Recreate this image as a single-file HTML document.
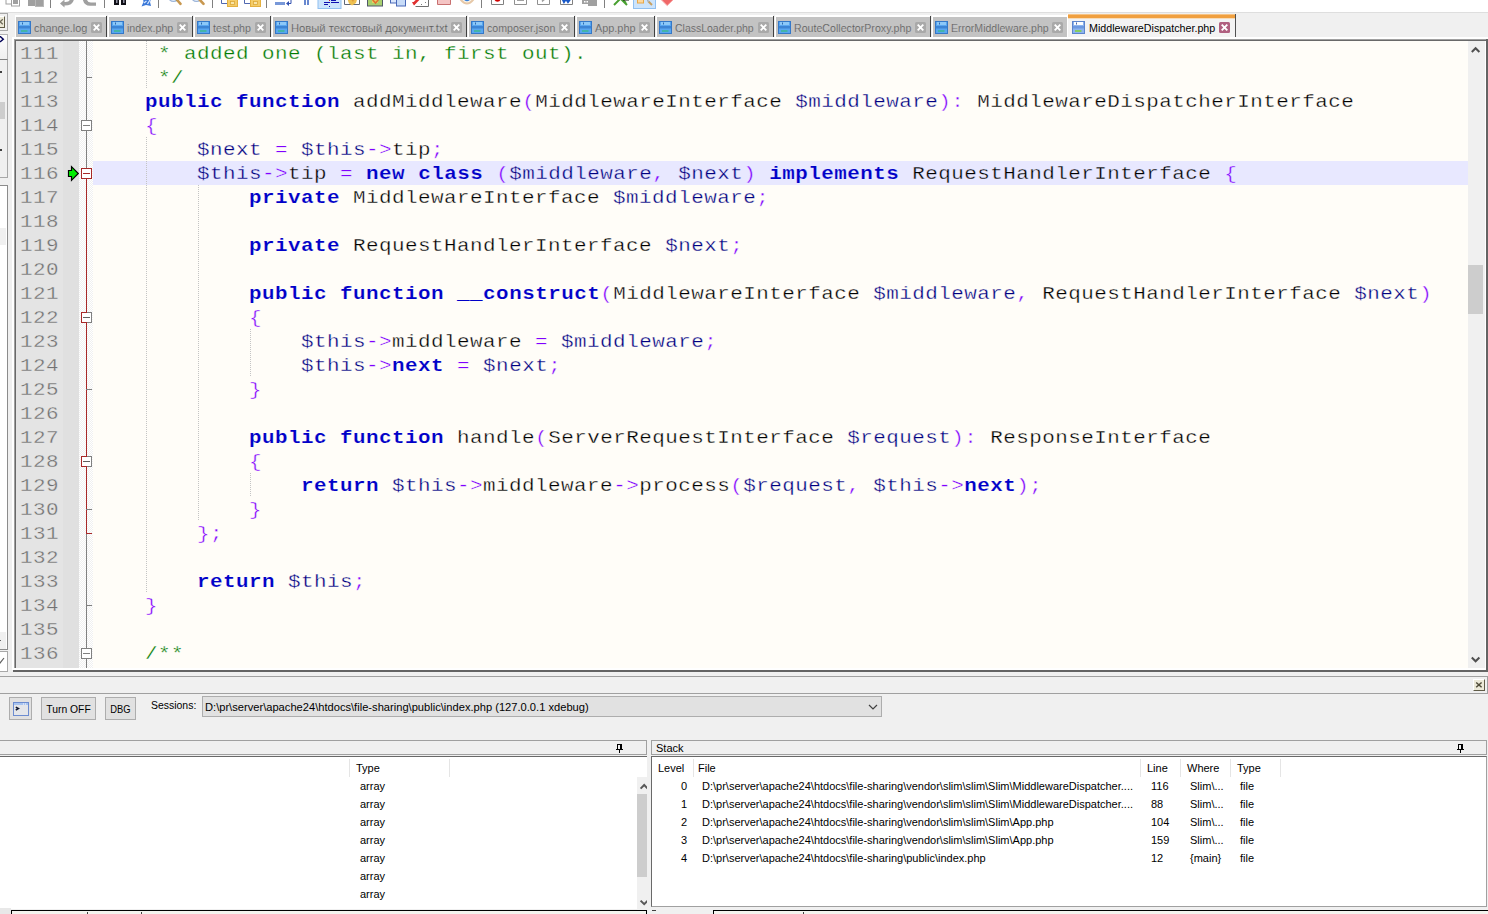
<!DOCTYPE html>
<html lang="en"><head><meta charset="utf-8"><title>Notepad++ - MiddlewareDispatcher.php</title>
<style>

*{box-sizing:border-box;margin:0;padding:0}
html,body{width:1488px;height:914px;overflow:hidden;background:#f0f0f0}
body{position:relative;font-family:"Liberation Sans","DejaVu Sans",sans-serif;font-size:11px;color:#000}
.abs,.abs *{position:absolute}
.abs{left:0;top:0;width:1488px;height:914px;overflow:hidden}
.b{display:block}
/* ---------- tabs */
.tab{top:17px;height:20px;background:#c3c3c3;color:#5e5e5e;white-space:nowrap}
.tab:before{content:"";position:absolute;left:-1px;top:-2px;width:1px;height:22px;background:#fff}
.tab:after{content:"";position:absolute;left:-1px;right:0;top:-2px;height:2px;background:#fff}
.tab .sep{right:-1px;top:-1px;width:1px;height:21px;background:#404040}
.tab .lbl{left:18px;top:5px;font-size:11px;line-height:13px;letter-spacing:0;transform-origin:0 0;-webkit-text-stroke:0.18px #c3c3c3}
.tab .ico{left:2px;top:4px;width:13px;height:13px}
.tab .cls{right:4px;top:5px;width:11px;height:11px}
.tab.act{top:14px;height:24px;background:#f3f3f3;color:#000}
.tab.act:before{height:24px;top:0}
.tab.act:after{display:none}
.tab.act .bar{left:0;right:0;top:0;height:5px;background:#f0a040;border-top:1px solid #f6c384;border-bottom:1px solid #f8dcb8}
.tab.act .sep{right:-1px;top:0;height:24px;background:#505050}
.tab.act .lbl{top:8px;left:20.5px;-webkit-text-stroke:0}
.tab.act .ico{left:4px;top:7px}
.tab.act .cls{top:8px;right:5px}
/* ---------- editor */
.ln{left:20.3px;height:24px;font-family:"Liberation Mono","DejaVu Sans Mono",monospace;font-size:18px;letter-spacing:0.407px;line-height:24px;color:#707070;white-space:pre;transform:scaleX(1.16);transform-origin:0 0;margin-top:1px}
.cl{left:93.25px;height:24px;font-family:"Liberation Mono","DejaVu Sans Mono",monospace;font-size:18px;letter-spacing:0.407px;line-height:24px;white-space:pre;color:#000;transform:scaleX(1.16);transform-origin:0 0;margin-top:1px}
.cl span{position:static}
.cl,.ln{-webkit-text-stroke:0.3px #fffdf8}
.ln{-webkit-text-stroke-color:#e4e4e4}
.cl.hl{-webkit-text-stroke-color:#e8e8ff}
.cl .k{-webkit-text-stroke-width:0.15px}
.cl .u{-webkit-text-stroke-width:0}
.cl .o{-webkit-text-stroke-width:0.36px}
.k{color:#0000c8;font-weight:bold}
.v{color:#000080}
.o{color:#8000ff}
.c{color:#007a00}
.g{width:1px;height:24px;background-image:linear-gradient(#c4c4c4 50%,transparent 50%);background-size:1px 2px}
/* ---------- lists */
.hd{font-size:11px;line-height:13px;white-space:nowrap}
.row{font-size:11px;line-height:13px;white-space:nowrap}

</style></head><body>
<div class="abs">
<div class="b" style="left:0;top:0;width:1488px;height:12px;background:#fff"></div>
<div class="b" style="left:0;top:12px;width:1488px;height:1px;background:#dedede"></div>
<svg class="b" style="left:0;top:0" width="720" height="12" viewBox="0 0 720 12">
<rect x="6" y="-3" width="7" height="7" fill="#fff" stroke="#a0a0a0"/><rect x="11.5" y="-3" width="8" height="9" fill="#fff" stroke="#a0a0a0"/><rect x="13" y="-3" width="5" height="7" fill="#a0a0a0"/>
<rect x="28" y="-3" width="16" height="9" fill="#a0a0a0"/><rect x="35.5" y="-3" width="8" height="9.5" fill="none" stroke="#b8b8b8"/>
<rect x="50" y="0" width="1" height="8" fill="#808080"/>
<path d="M60 3.5 L64.5 -0.5 L64.5 2 Q70 2.5 70.5 -2 L74 -2 Q74 5.5 64.5 5.5 L64.5 7.5 Z" fill="#a0a0a0"/>
<path d="M82.5 -2 Q83.5 5.8 90 5.8 L96 5.8 L96 2.5 L91 2.5 Q87 2.5 86.5 -2 Z" fill="#a0a0a0"/>
<rect x="104" y="0" width="1" height="8" fill="#808080"/>
<rect x="114" y="-2" width="5" height="7" fill="#101018"/><rect x="121" y="-2" width="5" height="7" fill="#101018"/><rect x="116" y="-1" width="1.5" height="4" fill="#9090a0"/><rect x="123" y="-1" width="1.5" height="4" fill="#9090a0"/>
<path d="M143 -2 L151.5 -2 L150 2 L151 6 L146 5 L141.5 6.5 L143.5 2 Z" fill="#3a78d8"/><path d="M144 3 L146.5 1 M147.5 4 L150 0" stroke="#d4e4fc" stroke-width="1.3" fill="none"/>
<rect x="158" y="0" width="1" height="8" fill="#808080"/>
<ellipse cx="173.5" cy="-3.5" rx="5" ry="5" fill="#dce8f8" stroke="#9cb4d8" stroke-width="1.2"/><path d="M176.5 -0.5 L177.5 0.5" stroke="#406030" stroke-width="2.4"/><path d="M177.5 0.5 L180.5 3.8" stroke="#c89850" stroke-width="2.6" stroke-linecap="round"/>
<ellipse cx="196.5" cy="-3.5" rx="5" ry="5" fill="#dce8f8" stroke="#9cb4d8" stroke-width="1.2"/><path d="M199.5 -0.5 L203.5 3.8" stroke="#c89850" stroke-width="2.6" stroke-linecap="round"/>
<rect x="212" y="0" width="1" height="8" fill="#808080"/>
<path d="M221.5 -2 V3.5 H229" stroke="#5068b0" fill="none"/><rect x="227.5" y="-1" width="10" height="7.5" fill="#f4cc68" stroke="#e4b040"/><rect x="230.5" y="1.5" width="4" height="3" fill="#f8e4a8" stroke="#dca838" stroke-width=".8"/>
<path d="M244.5 -2 V3.5 H252" stroke="#5068b0" fill="none"/><rect x="250.5" y="-1" width="10" height="7.5" fill="#f4cc68" stroke="#e4b040"/><rect x="253.5" y="1.5" width="4" height="3" fill="#f8e4a8" stroke="#dca838" stroke-width=".8"/>
<rect x="266" y="0" width="1" height="8" fill="#808080"/>
<rect x="275" y="2" width="10" height="3" fill="#7898d8"/><path d="M291 0 V3.5 H288" stroke="#3050b0" fill="none"/><path d="M286 3.5 L289 1 L289 6 Z" fill="#3050b0"/>
<rect x="304" y="-2" width="2" height="7" fill="#6888d0"/><rect x="307" y="-2" width="2" height="7" fill="#6888d0"/>
<rect x="318" y="-2" width="23" height="10.5" fill="#cce4fc" stroke="#90c0f0"/><rect x="324" y="2" width="6" height="1" fill="#1010b0"/><rect x="331" y="2" width="8" height="1" fill="#1010b0"/><rect x="324" y="4" width="4" height="1" fill="#1010b0"/><rect x="331" y="0" width="5" height="1" fill="#1010b0"/><rect x="329" y="-1" width="1" height="2" fill="#e02020"/><rect x="329" y="6" width="1" height="1" fill="#1010b0"/>
<path d="M344.5 -2 V4.5 H359.5 V-2" fill="#fff" stroke="#606878"/><path d="M347 -2 L357.5 -2 L356 3 L352 5.5 L349 3.5 Z" fill="#eec050"/><path d="M350 -2 L355 -2 L353 2 Z" fill="#e09838"/>
<rect x="367.5" y="-2" width="15" height="8" fill="#a8d070" stroke="#505868"/><rect x="372" y="-2" width="6" height="5" fill="#e8d060"/><path d="M372 -1 L375.5 3 L379 -1" stroke="#e07030" stroke-width="1.5" fill="none"/>
<rect x="390.5" y="-2" width="6" height="5" fill="#dce8fc" stroke="#4868b8"/><rect x="396.5" y="-2" width="9" height="8" fill="#c8dcf8" stroke="#4868b8"/>
<path d="M415.5 6.5 H428.5 V-2" fill="none" stroke="#707070"/><path d="M413.5 4 L420 -2.5" stroke="#e03030" stroke-width="2.6"/><path d="M412 2 L416.5 2 L414 5.5 Z" fill="#e03030"/><path d="M421 4.5 H423 M425.5 2 V4" stroke="#808080" stroke-width="1" stroke-dasharray="1 1"/>
<path d="M437.5 -2 V4.5 H450.5 V-2" fill="#f4c4c4" stroke="#c87070"/>
<path d="M459.5 -2 Q467 9 474.5 -2" stroke="#e6c8a8" stroke-width="2" fill="#fbf4ea"/><path d="M462.5 -2 Q467 4.5 471.5 -2 Z" fill="#3880d8"/>
<rect x="481" y="0" width="1" height="8" fill="#808080"/>
<path d="M491.5 -2 V4.5 H503.5 V-2" fill="#fff" stroke="#808080"/><circle cx="497.5" cy="-1.2" r="3" fill="#d00000"/>
<path d="M514.5 -2 V4.5 H526.5 V-2" fill="#fff" stroke="#909090"/><rect x="517" y="-2" width="7" height="3" fill="#a0a0a0"/>
<path d="M537.5 -2 V4.5 H549.5 V-2" fill="#fff" stroke="#909090"/><path d="M541.5 -2 L547.5 -2 L542 2.2 Z" fill="#a0a0a0"/>
<path d="M560.5 -2 V4.5 H572.5 V-2" fill="#fff" stroke="#808080"/><path d="M562 -2 L564 2 L566 -1 L568 2 L571 -2" stroke="#1858c8" stroke-width="2" fill="none"/>
<path d="M582 -2 H597 V6 H588 V4 H582 Z" fill="#a0a0a0"/><rect x="584" y="1" width="1.5" height="1.5" fill="#fff"/><rect x="586.5" y="1" width="1.5" height="1.5" fill="#fff"/><rect x="589" y="-2" width="7" height="2" fill="#fff"/>
<rect x="604" y="0" width="1" height="8" fill="#808080"/>
<path d="M614 5 L621 -2 M620 -2 L627 5 M622 -1 L626 3" stroke="#48a030" stroke-width="2" fill="none"/><rect x="623" y="-2" width="6" height="2.5" fill="#101010"/>
<rect x="633.5" y="-2" width="22" height="10.5" fill="#cce4fc" stroke="#90c0f0"/><rect x="637.5" y="-2" width="6" height="5" fill="#fcd8a0" stroke="#e8a848"/><path d="M648 1 L652 5" stroke="#c8a060" stroke-width="2"/><path d="M646 -1 L649 2" stroke="#a0b0c8" stroke-width="1"/>
<path d="M659.5 -2 L675 -2 L667.2 5.6 Z" fill="#f06868" stroke="#f8a8a8"/>
</svg>
<div class="tab b" style="left:16px;width:90px"><svg class="ico" width="13" height="13" viewBox="0 0 13 13"><rect x="0" y="0" width="13" height="13" fill="#3478c8"/><rect x="1" y="1" width="11" height="11" fill="#58a6f0"/><rect x="2" y="1" width="9" height="3" fill="#8cc8f8"/><rect x="4" y="1.5" width="1" height="2" fill="#2c68b0"/><rect x="1" y="5" width="11" height="2.5" fill="#3c84d4"/><rect x="3" y="9" width="6.5" height="2" fill="#44b4a8"/></svg><span class="lbl" style="transform:scaleX(0.99)">change.log</span><svg class="cls" width="11" height="11" viewBox="0 0 11 11"><rect x="0" y="0" width="11" height="11" rx="1.5" fill="#a9a9a9"/><path d="M2.7 2.7 L8.3 8.3 M8.3 2.7 L2.7 8.3" stroke="#fff" stroke-width="1.9" stroke-linecap="butt"/></svg><i class="sep b"></i></div>
<div class="tab b" style="left:109px;width:83px"><svg class="ico" width="13" height="13" viewBox="0 0 13 13"><rect x="0" y="0" width="13" height="13" fill="#3478c8"/><rect x="1" y="1" width="11" height="11" fill="#58a6f0"/><rect x="2" y="1" width="9" height="3" fill="#8cc8f8"/><rect x="4" y="1.5" width="1" height="2" fill="#2c68b0"/><rect x="1" y="5" width="11" height="2.5" fill="#3c84d4"/><rect x="3" y="9" width="6.5" height="2" fill="#44b4a8"/></svg><span class="lbl" style="transform:scaleX(0.97)">index.php</span><svg class="cls" width="11" height="11" viewBox="0 0 11 11"><rect x="0" y="0" width="11" height="11" rx="1.5" fill="#a9a9a9"/><path d="M2.7 2.7 L8.3 8.3 M8.3 2.7 L2.7 8.3" stroke="#fff" stroke-width="1.9" stroke-linecap="butt"/></svg><i class="sep b"></i></div>
<div class="tab b" style="left:195px;width:75px"><svg class="ico" width="13" height="13" viewBox="0 0 13 13"><rect x="0" y="0" width="13" height="13" fill="#3478c8"/><rect x="1" y="1" width="11" height="11" fill="#58a6f0"/><rect x="2" y="1" width="9" height="3" fill="#8cc8f8"/><rect x="4" y="1.5" width="1" height="2" fill="#2c68b0"/><rect x="1" y="5" width="11" height="2.5" fill="#3c84d4"/><rect x="3" y="9" width="6.5" height="2" fill="#44b4a8"/></svg><span class="lbl" style="transform:scaleX(0.97)">test.php</span><svg class="cls" width="11" height="11" viewBox="0 0 11 11"><rect x="0" y="0" width="11" height="11" rx="1.5" fill="#a9a9a9"/><path d="M2.7 2.7 L8.3 8.3 M8.3 2.7 L2.7 8.3" stroke="#fff" stroke-width="1.9" stroke-linecap="butt"/></svg><i class="sep b"></i></div>
<div class="tab b" style="left:273px;width:193px"><svg class="ico" width="13" height="13" viewBox="0 0 13 13"><rect x="0" y="0" width="13" height="13" fill="#3478c8"/><rect x="1" y="1" width="11" height="11" fill="#58a6f0"/><rect x="2" y="1" width="9" height="3" fill="#8cc8f8"/><rect x="4" y="1.5" width="1" height="2" fill="#2c68b0"/><rect x="1" y="5" width="11" height="2.5" fill="#3c84d4"/><rect x="3" y="9" width="6.5" height="2" fill="#44b4a8"/></svg><span class="lbl" style="transform:scaleX(1.02)">Новый текстовый документ.txt</span><svg class="cls" width="11" height="11" viewBox="0 0 11 11"><rect x="0" y="0" width="11" height="11" rx="1.5" fill="#a9a9a9"/><path d="M2.7 2.7 L8.3 8.3 M8.3 2.7 L2.7 8.3" stroke="#fff" stroke-width="1.9" stroke-linecap="butt"/></svg><i class="sep b"></i></div>
<div class="tab b" style="left:469px;width:105px"><svg class="ico" width="13" height="13" viewBox="0 0 13 13"><rect x="0" y="0" width="13" height="13" fill="#3478c8"/><rect x="1" y="1" width="11" height="11" fill="#58a6f0"/><rect x="2" y="1" width="9" height="3" fill="#8cc8f8"/><rect x="4" y="1.5" width="1" height="2" fill="#2c68b0"/><rect x="1" y="5" width="11" height="2.5" fill="#3c84d4"/><rect x="3" y="9" width="6.5" height="2" fill="#44b4a8"/></svg><span class="lbl" style="transform:scaleX(0.963)">composer.json</span><svg class="cls" width="11" height="11" viewBox="0 0 11 11"><rect x="0" y="0" width="11" height="11" rx="1.5" fill="#a9a9a9"/><path d="M2.7 2.7 L8.3 8.3 M8.3 2.7 L2.7 8.3" stroke="#fff" stroke-width="1.9" stroke-linecap="butt"/></svg><i class="sep b"></i></div>
<div class="tab b" style="left:577px;width:77px"><svg class="ico" width="13" height="13" viewBox="0 0 13 13"><rect x="0" y="0" width="13" height="13" fill="#3478c8"/><rect x="1" y="1" width="11" height="11" fill="#58a6f0"/><rect x="2" y="1" width="9" height="3" fill="#8cc8f8"/><rect x="4" y="1.5" width="1" height="2" fill="#2c68b0"/><rect x="1" y="5" width="11" height="2.5" fill="#3c84d4"/><rect x="3" y="9" width="6.5" height="2" fill="#44b4a8"/></svg><span class="lbl" style="transform:scaleX(0.988)">App.php</span><svg class="cls" width="11" height="11" viewBox="0 0 11 11"><rect x="0" y="0" width="11" height="11" rx="1.5" fill="#a9a9a9"/><path d="M2.7 2.7 L8.3 8.3 M8.3 2.7 L2.7 8.3" stroke="#fff" stroke-width="1.9" stroke-linecap="butt"/></svg><i class="sep b"></i></div>
<div class="tab b" style="left:657px;width:116px"><svg class="ico" width="13" height="13" viewBox="0 0 13 13"><rect x="0" y="0" width="13" height="13" fill="#3478c8"/><rect x="1" y="1" width="11" height="11" fill="#58a6f0"/><rect x="2" y="1" width="9" height="3" fill="#8cc8f8"/><rect x="4" y="1.5" width="1" height="2" fill="#2c68b0"/><rect x="1" y="5" width="11" height="2.5" fill="#3c84d4"/><rect x="3" y="9" width="6.5" height="2" fill="#44b4a8"/></svg><span class="lbl" style="transform:scaleX(0.953)">ClassLoader.php</span><svg class="cls" width="11" height="11" viewBox="0 0 11 11"><rect x="0" y="0" width="11" height="11" rx="1.5" fill="#a9a9a9"/><path d="M2.7 2.7 L8.3 8.3 M8.3 2.7 L2.7 8.3" stroke="#fff" stroke-width="1.9" stroke-linecap="butt"/></svg><i class="sep b"></i></div>
<div class="tab b" style="left:776px;width:154px"><svg class="ico" width="13" height="13" viewBox="0 0 13 13"><rect x="0" y="0" width="13" height="13" fill="#3478c8"/><rect x="1" y="1" width="11" height="11" fill="#58a6f0"/><rect x="2" y="1" width="9" height="3" fill="#8cc8f8"/><rect x="4" y="1.5" width="1" height="2" fill="#2c68b0"/><rect x="1" y="5" width="11" height="2.5" fill="#3c84d4"/><rect x="3" y="9" width="6.5" height="2" fill="#44b4a8"/></svg><span class="lbl" style="transform:scaleX(0.966)">RouteCollectorProxy.php</span><svg class="cls" width="11" height="11" viewBox="0 0 11 11"><rect x="0" y="0" width="11" height="11" rx="1.5" fill="#a9a9a9"/><path d="M2.7 2.7 L8.3 8.3 M8.3 2.7 L2.7 8.3" stroke="#fff" stroke-width="1.9" stroke-linecap="butt"/></svg><i class="sep b"></i></div>
<div class="tab b" style="left:933px;width:134px"><svg class="ico" width="13" height="13" viewBox="0 0 13 13"><rect x="0" y="0" width="13" height="13" fill="#3478c8"/><rect x="1" y="1" width="11" height="11" fill="#58a6f0"/><rect x="2" y="1" width="9" height="3" fill="#8cc8f8"/><rect x="4" y="1.5" width="1" height="2" fill="#2c68b0"/><rect x="1" y="5" width="11" height="2.5" fill="#3c84d4"/><rect x="3" y="9" width="6.5" height="2" fill="#44b4a8"/></svg><span class="lbl" style="transform:scaleX(0.956)">ErrorMiddleware.php</span><svg class="cls" width="11" height="11" viewBox="0 0 11 11"><rect x="0" y="0" width="11" height="11" rx="1.5" fill="#a9a9a9"/><path d="M2.7 2.7 L8.3 8.3 M8.3 2.7 L2.7 8.3" stroke="#fff" stroke-width="1.9" stroke-linecap="butt"/></svg></div>
<div class="tab act b" style="left:1068px;width:167px"><i class="bar b"></i><svg class="ico" width="13" height="13" viewBox="0 0 13 13"><rect x="0" y="0" width="13" height="13" fill="#5c84cc"/><rect x="1" y="1" width="11" height="11" fill="#8db4ee"/><rect x="2" y="1" width="9" height="3" fill="#fbfdff"/><rect x="4" y="1.5" width="1" height="2" fill="#4464a8"/><rect x="1" y="5" width="11" height="2.5" fill="#6c98e0"/><rect x="3" y="9" width="6.5" height="2" fill="#86cc60"/></svg><span class="lbl" style="transform:scaleX(.974)">MiddlewareDispatcher.php</span><svg class="cls" width="11" height="11" viewBox="0 0 11 11"><rect x="0" y="0" width="11" height="11" rx="1.5" fill="#b06080"/><path d="M2.7 2.7 L8.3 8.3 M8.3 2.7 L2.7 8.3" stroke="#fff" stroke-width="1.9" stroke-linecap="butt"/></svg><i class="sep b"></i></div>
<div class="b" style="left:0;top:13px;width:12px;height:659px;background:#f0f0f0"></div>
<div class="b" style="left:-3px;top:13px;width:11px;height:18px;background:#f0f0f0;border:1px solid #a8a8a8"></div>
<div class="b" style="left:-6px;top:16px;width:11px;height:12px;background:#ece9d8;border:1px solid;border-color:#fff #605c48 #605c48 #fff"></div>
<svg class="b" style="left:0;top:18px" width="4" height="8" viewBox="0 0 4 8"><path d="M-2.5 1.2 L2.8 6.2 M2.8 1.2 L-2.5 6.2" stroke="#6c6858" stroke-width="1.3"/></svg>
<div class="b" style="left:-3px;top:34px;width:11px;height:25px;background:linear-gradient(#fdfdfd,#efefef);border:1px solid #b4b4b4;border-bottom:0"></div>
<svg class="b" style="left:0;top:35px" width="6" height="9" viewBox="0 0 6 9"><path d="M-2 1.8 L0.5 1.8 L3.3 4.2 L0.5 6.6 L-2 6.6" stroke="#000058" stroke-width="1.4" fill="none"/></svg>
<div class="b" style="left:-3px;top:59px;width:11px;height:119px;background:#f0f0f0;border:1px solid #a8a8a8;border-top-color:#808080"></div>
<div class="b" style="left:0;top:71px;width:2px;height:2px;background:#404040"></div>
<div class="b" style="left:0;top:102px;width:5px;height:17px;background:#cdcdcd"></div>
<div class="b" style="left:0;top:149px;width:2px;height:2px;background:#404040"></div>
<div class="b" style="left:-3px;top:185px;width:11px;height:465px;background:#fff;border:1px solid #8c8c8c"></div>
<div class="b" style="left:0;top:228px;width:6px;height:17px;background:#f0f0f0"></div>
<div class="b" style="left:0;top:632px;width:6px;height:17px;background:#f0f0f0"></div>
<div class="b" style="left:0;top:640px;width:1px;height:1px;background:#606060"></div>
<div class="b" style="left:-3px;top:651px;width:11px;height:21px;background:#fff;border:1px solid #a8a8a8"></div>
<svg class="b" style="left:0;top:655px" width="6" height="10" viewBox="0 0 6 10"><path d="M-2 6 L0 8 L4 3" stroke="#606060" stroke-width="1.2" fill="none"/></svg>
<div class="b" style="left:12px;top:37px;width:1476px;height:2px;background:#fff"></div>
<div class="b" style="left:12px;top:37px;width:2px;height:633px;background:#fff"></div>
<div class="b" style="left:14px;top:39px;width:1474px;height:1px;background:#a0a0a0"></div>
<div class="b" style="left:14px;top:39px;width:1px;height:631px;background:#a0a0a0"></div>
<div class="b" style="left:15px;top:40px;width:1473px;height:1px;background:#696969"></div>
<div class="b" style="left:15px;top:40px;width:1px;height:629px;background:#696969"></div>
<div class="b" style="left:16px;top:41px;width:1469px;height:628px;background:#fffdf8"></div>
<div class="b" style="left:14px;top:668px;width:1472px;height:2px;background:#fff"></div>
<div class="b" style="left:13px;top:670px;width:1475px;height:2px;background:#646464"></div>
<div class="b" style="left:1485px;top:41px;width:1px;height:629px;background:#fff"></div>
<div class="b" style="left:1486px;top:39px;width:2px;height:633px;background:#646464"></div>
<div class="b" style="left:16px;top:41px;width:47px;height:627px;background:#e4e4e4"></div>
<div class="b" style="left:63px;top:41px;width:16px;height:627px;background:#e0e0e0"></div>
<div class="b" style="left:79px;top:41px;width:14px;height:627px;background-color:#fff;background-image:linear-gradient(45deg,#f0f0f0 25%,transparent 25%,transparent 75%,#f0f0f0 75%),linear-gradient(45deg,#f0f0f0 25%,transparent 25%,transparent 75%,#f0f0f0 75%);background-size:2px 2px;background-position:0 0,1px 1px"></div>
<div class="b" style="left:93px;top:161px;width:1375px;height:24px;background:#e8e8ff"></div>
<div class="b" style="left:0;top:41px;width:1468px;height:627px;overflow:hidden">
<div class="ln b" style="top:0px">111</div>
<i class="g b" style="left:146px;top:0px"></i>
<div class="cl b" style="top:0px">     <span class="c">* added one (last in, first out).</span></div>
<div class="ln b" style="top:24px">112</div>
<i class="g b" style="left:146px;top:24px"></i>
<div class="cl b" style="top:24px">     <span class="c">*/</span></div>
<div class="ln b" style="top:48px">113</div>
<div class="cl b" style="top:48px">    <span class="k">public</span> <span class="k">function</span> addMiddleware<span class="o">(</span>MiddlewareInterface <span class="v">$middleware</span><span class="o">):</span> MiddlewareDispatcherInterface</div>
<div class="ln b" style="top:72px">114</div>
<div class="cl b" style="top:72px">    <span class="o">{</span></div>
<div class="ln b" style="top:96px">115</div>
<i class="g b" style="left:146px;top:96px"></i>
<div class="cl b" style="top:96px">        <span class="v">$next</span> <span class="o">=</span> <span class="v">$this</span><span class="o">-&gt;</span>tip<span class="o">;</span></div>
<div class="ln b" style="top:120px">116</div>
<i class="g b" style="left:146px;top:120px"></i>
<div class="cl b hl" style="top:120px">        <span class="v">$this</span><span class="o">-&gt;</span>tip <span class="o">=</span> <span class="k">new</span> <span class="k">class</span> <span class="o">(</span><span class="v">$middleware</span><span class="o">,</span> <span class="v">$next</span><span class="o">)</span> <span class="k">implements</span> RequestHandlerInterface <span class="o">{</span></div>
<div class="ln b" style="top:144px">117</div>
<i class="g b" style="left:146px;top:144px"></i>
<i class="g b" style="left:198px;top:144px"></i>
<div class="cl b" style="top:144px">            <span class="k">private</span> MiddlewareInterface <span class="v">$middleware</span><span class="o">;</span></div>
<div class="ln b" style="top:168px">118</div>
<i class="g b" style="left:146px;top:168px"></i>
<i class="g b" style="left:198px;top:168px"></i>
<div class="ln b" style="top:192px">119</div>
<i class="g b" style="left:146px;top:192px"></i>
<i class="g b" style="left:198px;top:192px"></i>
<div class="cl b" style="top:192px">            <span class="k">private</span> RequestHandlerInterface <span class="v">$next</span><span class="o">;</span></div>
<div class="ln b" style="top:216px">120</div>
<i class="g b" style="left:146px;top:216px"></i>
<i class="g b" style="left:198px;top:216px"></i>
<div class="ln b" style="top:240px">121</div>
<i class="g b" style="left:146px;top:240px"></i>
<i class="g b" style="left:198px;top:240px"></i>
<div class="cl b" style="top:240px">            <span class="k">public</span> <span class="k">function</span> <span class="k u">__</span><span class="k">construct</span><span class="o">(</span>MiddlewareInterface <span class="v">$middleware</span><span class="o">,</span> RequestHandlerInterface <span class="v">$next</span><span class="o">)</span></div>
<div class="ln b" style="top:264px">122</div>
<i class="g b" style="left:146px;top:264px"></i>
<i class="g b" style="left:198px;top:264px"></i>
<div class="cl b" style="top:264px">            <span class="o">{</span></div>
<div class="ln b" style="top:288px">123</div>
<i class="g b" style="left:146px;top:288px"></i>
<i class="g b" style="left:198px;top:288px"></i>
<i class="g b" style="left:250px;top:288px"></i>
<div class="cl b" style="top:288px">                <span class="v">$this</span><span class="o">-&gt;</span>middleware <span class="o">=</span> <span class="v">$middleware</span><span class="o">;</span></div>
<div class="ln b" style="top:312px">124</div>
<i class="g b" style="left:146px;top:312px"></i>
<i class="g b" style="left:198px;top:312px"></i>
<i class="g b" style="left:250px;top:312px"></i>
<div class="cl b" style="top:312px">                <span class="v">$this</span><span class="o">-&gt;</span><span class="k">next</span> <span class="o">=</span> <span class="v">$next</span><span class="o">;</span></div>
<div class="ln b" style="top:336px">125</div>
<i class="g b" style="left:146px;top:336px"></i>
<i class="g b" style="left:198px;top:336px"></i>
<div class="cl b" style="top:336px">            <span class="o">}</span></div>
<div class="ln b" style="top:360px">126</div>
<i class="g b" style="left:146px;top:360px"></i>
<i class="g b" style="left:198px;top:360px"></i>
<div class="ln b" style="top:384px">127</div>
<i class="g b" style="left:146px;top:384px"></i>
<i class="g b" style="left:198px;top:384px"></i>
<div class="cl b" style="top:384px">            <span class="k">public</span> <span class="k">function</span> handle<span class="o">(</span>ServerRequestInterface <span class="v">$request</span><span class="o">):</span> ResponseInterface</div>
<div class="ln b" style="top:408px">128</div>
<i class="g b" style="left:146px;top:408px"></i>
<i class="g b" style="left:198px;top:408px"></i>
<div class="cl b" style="top:408px">            <span class="o">{</span></div>
<div class="ln b" style="top:432px">129</div>
<i class="g b" style="left:146px;top:432px"></i>
<i class="g b" style="left:198px;top:432px"></i>
<i class="g b" style="left:250px;top:432px"></i>
<div class="cl b" style="top:432px">                <span class="k">return</span> <span class="v">$this</span><span class="o">-&gt;</span>middleware<span class="o">-&gt;</span>process<span class="o">(</span><span class="v">$request</span><span class="o">,</span> <span class="v">$this</span><span class="o">-&gt;</span><span class="k">next</span><span class="o">);</span></div>
<div class="ln b" style="top:456px">130</div>
<i class="g b" style="left:146px;top:456px"></i>
<i class="g b" style="left:198px;top:456px"></i>
<div class="cl b" style="top:456px">            <span class="o">}</span></div>
<div class="ln b" style="top:480px">131</div>
<i class="g b" style="left:146px;top:480px"></i>
<div class="cl b" style="top:480px">        <span class="o">};</span></div>
<div class="ln b" style="top:504px">132</div>
<i class="g b" style="left:146px;top:504px"></i>
<div class="ln b" style="top:528px">133</div>
<i class="g b" style="left:146px;top:528px"></i>
<div class="cl b" style="top:528px">        <span class="k">return</span> <span class="v">$this</span><span class="o">;</span></div>
<div class="ln b" style="top:552px">134</div>
<div class="cl b" style="top:552px">    <span class="o">}</span></div>
<div class="ln b" style="top:576px">135</div>
<div class="ln b" style="top:600px">136</div>
<div class="cl b" style="top:600px">    <span class="c">/**</span></div>
</div>
<svg class="b" style="left:79px;top:41px" width="14" height="627" viewBox="79 41 14 627" shape-rendering="crispEdges">
<rect x="86" y="41" width="1" height="127" fill="#808080"/>
<rect x="86" y="77" width="6" height="1" fill="#808080"/>
<rect x="86" y="179" width="1" height="355" fill="#a82828"/>
<rect x="86" y="389" width="6" height="1" fill="#808080"/>
<rect x="86" y="509" width="6" height="1" fill="#808080"/>
<rect x="86" y="533" width="6" height="1" fill="#a82828"/>
<rect x="86" y="534" width="1" height="134" fill="#808080"/>
<rect x="86" y="605" width="6" height="1" fill="#808080"/>
<rect x="81.5" y="120.5" width="10" height="10" fill="#fff" stroke="#808080"/><rect x="83" y="125" width="7" height="1" fill="#808080"/>
<rect x="81.5" y="168.5" width="10" height="10" fill="#fff" stroke="#a82828"/><rect x="83" y="173" width="7" height="1" fill="#a82828"/>
<rect x="81.5" y="312.5" width="10" height="10" fill="#fff" stroke="#808080"/><path d="M86.5 312.5 H81.5 V322.5 H86.5" fill="none" stroke="#a82828"/><rect x="83" y="317" width="7" height="1" fill="#606060"/>
<rect x="81.5" y="456.5" width="10" height="10" fill="#fff" stroke="#808080"/><path d="M86.5 456.5 H81.5 V466.5 H86.5" fill="none" stroke="#a82828"/><rect x="83" y="461" width="7" height="1" fill="#606060"/>
<rect x="81.5" y="648.5" width="10" height="10" fill="#fff" stroke="#808080"/><rect x="83" y="653" width="7" height="1" fill="#808080"/>
</svg>
<svg class="b" style="left:66px;top:164px" width="14" height="18" viewBox="66 164 14 18"><path d="M68.5 170.5 H71.5 V166.7 L78.3 173.5 L71.5 180.3 V176.5 H68.5 Z" fill="#00ee00" stroke="#000" stroke-width="1.2" stroke-linejoin="miter"/></svg>
<div class="b" style="left:1468px;top:41px;width:17px;height:627px;background:#f0f0f0"></div>
<div class="b" style="left:1468px;top:265px;width:15px;height:49px;background:#cdcdcd"></div>
<svg class="b" style="left:1468px;top:41px" width="17" height="17" viewBox="0 0 17 17"><path d="M3.8 11 L7.6 7.2 L11.4 11" stroke="#505050" stroke-width="2" fill="none"/></svg>
<svg class="b" style="left:1468px;top:651px" width="17" height="17" viewBox="0 0 17 17"><path d="M3.8 6.5 L7.6 10.3 L11.4 6.5" stroke="#505050" stroke-width="2" fill="none"/></svg>
<div class="b" style="left:0;top:672px;width:1488px;height:242px;background:#f0f0f0"></div>
<div class="b" style="left:-2px;top:676px;width:1490px;height:18px;border:1px solid #a0a0a0;background:#f0f0f0"></div>
<div class="b" style="left:1473px;top:679px;width:12px;height:12px;background:#ece9d8;border:1px solid;border-color:#fff #605c48 #605c48 #fff"></div>
<svg class="b" style="left:1475px;top:681px" width="8" height="8" viewBox="0 0 8 8"><path d="M1.2 1.5 L6.6 6.2 M6.6 1.5 L1.2 6.2" stroke="#504c38" stroke-width="1.5"/></svg>
<div class="b" style="left:9px;top:697px;width:23px;height:23px;background:#e1e1e1;border:1px solid #adadad"></div>
<svg class="b" style="left:13px;top:702px" width="16" height="15" viewBox="0 0 16 15"><rect x="0.5" y="0.5" width="15" height="13" fill="#e4e6ea" stroke="#6c8cd0"/><rect x="1" y="1" width="14" height="2" fill="#a8c4f0"/><path d="M10 2 h1 m1 0 h1" stroke="#fff" stroke-width="1"/><path d="M2.8 5.2 L5.4 6.6 L2.8 8" stroke="#101830" stroke-width="1.5" fill="none"/></svg>
<div class="b" style="left:41px;top:697px;width:55px;height:23px;background:#e1e1e1;border:1px solid #adadad"><span style="left:0;right:0;top:5px;text-align:center;font-size:11px;line-height:13px;transform:scaleX(.94)">Turn OFF</span></div>
<div class="b" style="left:105px;top:697px;width:31px;height:23px;background:#e1e1e1;border:1px solid #adadad"><span style="left:0;right:0;top:5px;text-align:center;font-size:11px;line-height:13px;transform:scaleX(.85)">DBG</span></div>
<span class="b" style="left:151px;top:699px;font-size:11px;line-height:13px;transform:scaleX(.95);transform-origin:0 0">Sessions:</span>
<div class="b" style="left:202px;top:696px;width:680px;height:21px;background:#e1e1e1;border:1px solid #adadad"><span style="left:2px;top:4px;font-size:11px;line-height:13px;white-space:nowrap;transform:scaleX(1.012);transform-origin:0 0">D:\pr\server\apache24\htdocs\file-sharing\public\index.php (127.0.0.1 xdebug)</span><svg style="right:3px;top:6.5px" width="10" height="7" viewBox="0 0 10 7"><path d="M1 1 L5 5 L9 1" stroke="#404040" stroke-width="1.2" fill="none"/></svg></div>
<div class="b" style="left:-2px;top:740px;width:649px;height:15px;border:1px solid #a0a0a0;background:#f0f0f0"></div>
<div class="b" style="left:651px;top:740px;width:836px;height:15px;border:1px solid #a0a0a0;background:#f0f0f0"></div>
<span class="b" style="left:656px;top:742px;font-size:11px;line-height:13px">Stack</span>
<svg class="b" style="left:615px;top:743px" width="9" height="10" viewBox="0 0 9 10" shape-rendering="crispEdges"><path d="M2 1.5 H7 M2.5 1.5 V6.5 M5.5 1.5 V6.5 M6.5 1.5 V6.5 M1 6.5 H8 M4.5 6.5 V10" stroke="#000" stroke-width="1" fill="none"/></svg>
<svg class="b" style="left:1456px;top:743px" width="9" height="10" viewBox="0 0 9 10" shape-rendering="crispEdges"><path d="M2 1.5 H7 M2.5 1.5 V6.5 M5.5 1.5 V6.5 M6.5 1.5 V6.5 M1 6.5 H8 M4.5 6.5 V10" stroke="#000" stroke-width="1" fill="none"/></svg>
<div class="b" style="left:-2px;top:756px;width:649px;height:153px;background:#fff;border-top:1px solid #696969"></div>
<div class="b" style="left:349px;top:759px;width:1px;height:18px;background:#e5e5e5"></div>
<div class="b" style="left:449px;top:759px;width:1px;height:18px;background:#e5e5e5"></div>
<span class="hd b" style="left:356px;top:762px">Type</span>
<span class="row b" style="left:360px;top:780px">array</span>
<span class="row b" style="left:360px;top:798px">array</span>
<span class="row b" style="left:360px;top:816px">array</span>
<span class="row b" style="left:360px;top:834px">array</span>
<span class="row b" style="left:360px;top:852px">array</span>
<span class="row b" style="left:360px;top:870px">array</span>
<span class="row b" style="left:360px;top:888px">array</span>
<div class="b" style="left:637px;top:777px;width:10px;height:132px;background:#f0f0f0"></div>
<div class="b" style="left:637px;top:794px;width:10px;height:83px;background:#cdcdcd"></div>
<svg class="b" style="left:638px;top:781px" width="9" height="9" viewBox="0 0 9 9"><path d="M2.6 7.6 L6.2 4 L9.8 7.6" stroke="#585858" stroke-width="2" fill="none"/></svg>
<svg class="b" style="left:638px;top:898px" width="9" height="9" viewBox="0 0 9 9"><path d="M2.6 2.6 L6.2 6.2 L9.8 2.6" stroke="#585858" stroke-width="2" fill="none"/></svg>
<div class="b" style="left:651px;top:756px;width:836px;height:151px;background:#fff;border:1px solid;border-color:#696969 #a0a0a0 #a0a0a0 #696969"></div>
<div class="b" style="left:693px;top:759px;width:1px;height:18px;background:#e5e5e5"></div>
<div class="b" style="left:1140px;top:759px;width:1px;height:18px;background:#e5e5e5"></div>
<div class="b" style="left:1180px;top:759px;width:1px;height:18px;background:#e5e5e5"></div>
<div class="b" style="left:1230px;top:759px;width:1px;height:18px;background:#e5e5e5"></div>
<div class="b" style="left:1280px;top:759px;width:1px;height:18px;background:#e5e5e5"></div>
<span class="hd b" style="left:658px;top:762px">Level</span>
<span class="hd b" style="left:698px;top:762px">File</span>
<span class="hd b" style="left:1147px;top:762px">Line</span>
<span class="hd b" style="left:1187px;top:762px">Where</span>
<span class="hd b" style="left:1237px;top:762px">Type</span>
<span class="row b" style="left:660px;width:27px;text-align:right;top:780px">0</span>
<span class="row b" style="left:702px;top:780px">D:\pr\server\apache24\htdocs\file-sharing\vendor\slim\slim\Slim\MiddlewareDispatcher....</span>
<span class="row b" style="left:1151px;top:780px">116</span>
<span class="row b" style="left:1190px;top:780px">Slim\...</span>
<span class="row b" style="left:1240px;top:780px">file</span>
<span class="row b" style="left:660px;width:27px;text-align:right;top:798px">1</span>
<span class="row b" style="left:702px;top:798px">D:\pr\server\apache24\htdocs\file-sharing\vendor\slim\slim\Slim\MiddlewareDispatcher....</span>
<span class="row b" style="left:1151px;top:798px">88</span>
<span class="row b" style="left:1190px;top:798px">Slim\...</span>
<span class="row b" style="left:1240px;top:798px">file</span>
<span class="row b" style="left:660px;width:27px;text-align:right;top:816px">2</span>
<span class="row b" style="left:702px;top:816px">D:\pr\server\apache24\htdocs\file-sharing\vendor\slim\slim\Slim\App.php</span>
<span class="row b" style="left:1151px;top:816px">104</span>
<span class="row b" style="left:1190px;top:816px">Slim\...</span>
<span class="row b" style="left:1240px;top:816px">file</span>
<span class="row b" style="left:660px;width:27px;text-align:right;top:834px">3</span>
<span class="row b" style="left:702px;top:834px">D:\pr\server\apache24\htdocs\file-sharing\vendor\slim\slim\Slim\App.php</span>
<span class="row b" style="left:1151px;top:834px">159</span>
<span class="row b" style="left:1190px;top:834px">Slim\...</span>
<span class="row b" style="left:1240px;top:834px">file</span>
<span class="row b" style="left:660px;width:27px;text-align:right;top:852px">4</span>
<span class="row b" style="left:702px;top:852px">D:\pr\server\apache24\htdocs\file-sharing\public\index.php</span>
<span class="row b" style="left:1151px;top:852px">12</span>
<span class="row b" style="left:1190px;top:852px">{main}</span>
<span class="row b" style="left:1240px;top:852px">file</span>
<div class="b" style="left:0;top:908px;width:11px;height:6px;background:#e8e8e8"></div>
<div class="b" style="left:11px;top:910px;width:636px;height:4px;background:#f4f3ee;border:1px solid #000;border-bottom:0"></div>
<div class="b" style="left:652px;top:910px;width:4px;height:1px;background:#404040"></div>
<div class="b" style="left:87px;top:912px;width:1px;height:2px;background:#404040"></div>
<div class="b" style="left:141px;top:912px;width:1px;height:2px;background:#404040"></div>
<div class="b" style="left:713px;top:910px;width:775px;height:4px;background:#f4f3ee;border:1px solid #000;border-bottom:0;border-right:0"></div>
<div class="b" style="left:803px;top:912px;width:1px;height:2px;background:#404040"></div>
</div></body></html>
